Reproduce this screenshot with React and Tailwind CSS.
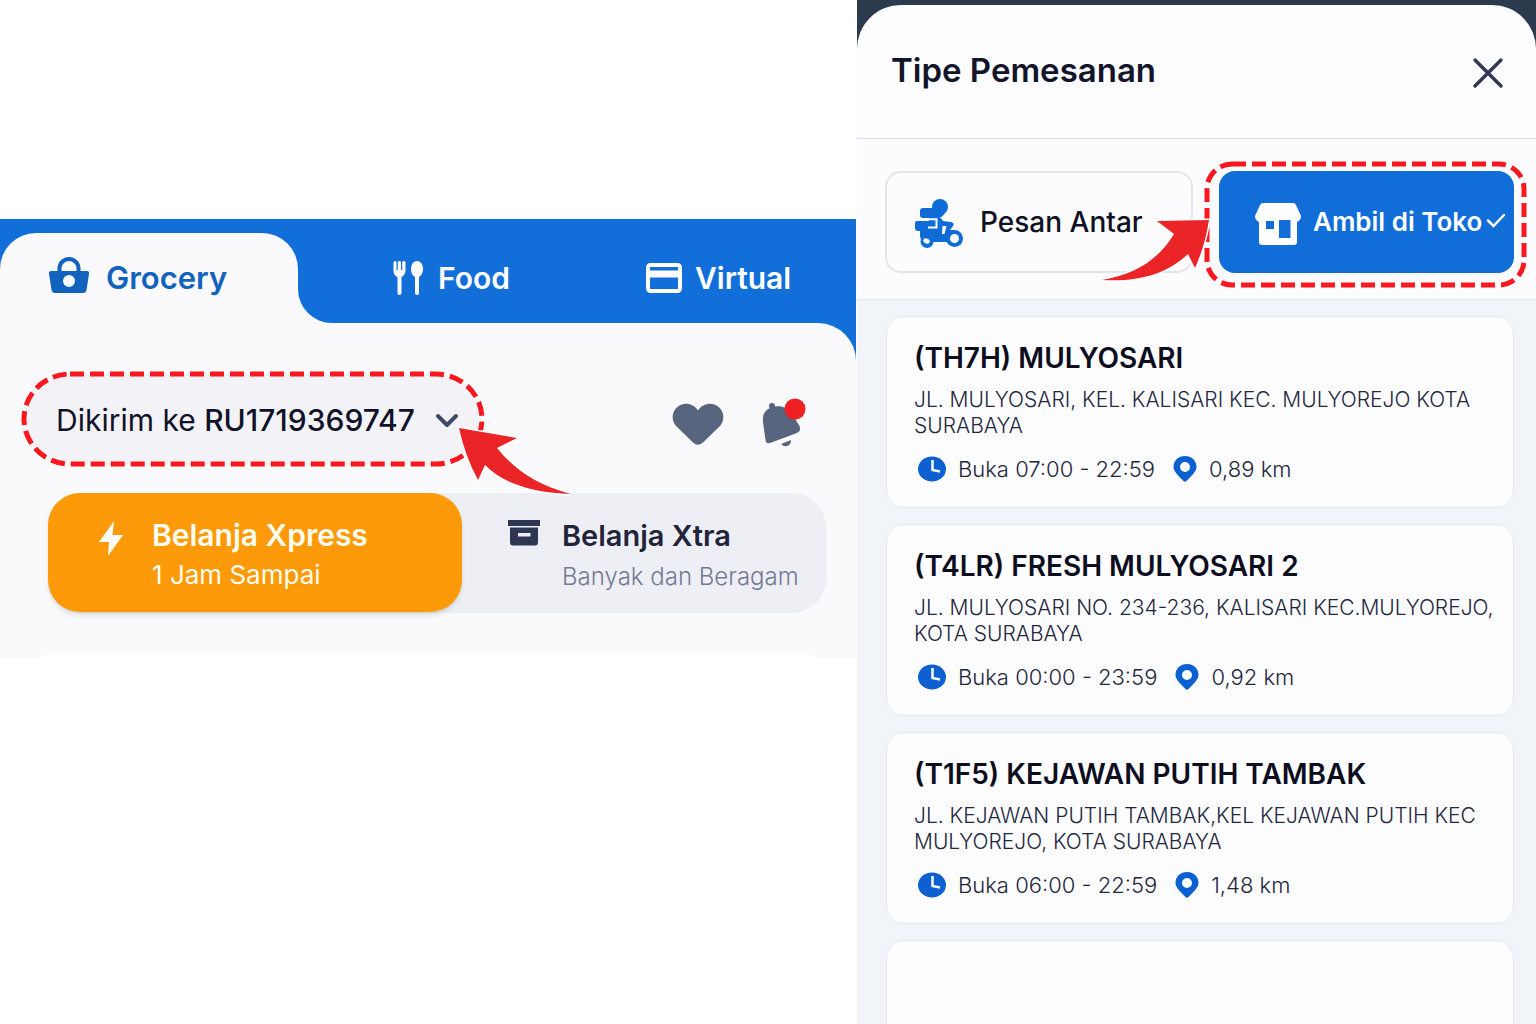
import React from "react";

const stores = [
  {
    name: "(TH7H) MULYOSARI",
    address: "JL. MULYOSARI, KEL. KALISARI KEC. MULYOREJO KOTA SURABAYA",
    hours: "Buka 07:00 - 22:59",
    distance: "0,89 km",
  },
  {
    name: "(T4LR) FRESH MULYOSARI 2",
    address: "JL. MULYOSARI NO. 234-236, KALISARI KEC.MULYOREJO, KOTA SURABAYA",
    hours: "Buka 00:00 - 23:59",
    distance: "0,92 km",
  },
  {
    name: "(T1F5) KEJAWAN PUTIH TAMBAK",
    address: "JL. KEJAWAN PUTIH TAMBAK,KEL KEJAWAN PUTIH KEC MULYOREJO, KOTA SURABAYA",
    hours: "Buka 06:00 - 22:59",
    distance: "1,48 km",
  },
];

function BasketIcon() {
  return (
    <svg width="42" height="38" viewBox="0 0 42 38" className="overflow-visible" aria-hidden="true">
      <path d="M11.500 14V9.500a9.500 9.500 0 0 1 19 0V14" fill="none" stroke="currentColor" strokeWidth="4" />
      <path
        fillRule="evenodd"
        fill="currentColor"
        d="M3 12H39Q41.500 12 41 15L38.500 31Q38 34 35 34H7Q4 34 3.500 31L1 15Q.500 12 3 12ZM21 16a6 6 0 1 0 0 12a6 6 0 1 0 0-12Z"
      />
    </svg>
  );
}

function CutleryIcon() {
  return (
    <svg width="32" height="36" viewBox="0 0 32 36" fill="currentColor" aria-hidden="true">
      <path d="M1.500 2Q3.500 0 4.500 2V10H5.800V2Q7.500 0 9 2V10H10.200V2Q11.500 0 13.500 2V11Q13 15 9.500 17V33Q9.500 35 7.500 35T5.500 33V17Q1.500 15 1.500 11Z" />
      <path d="M25 1C29 1 31 5 31 9C31 13 29.500 15.500 27 17V33Q27 35 25 35T23 33V17C20.500 15.500 19 13 19 9C19 5 21 1 25 1Z" />
    </svg>
  );
}

function CardIcon() {
  return (
    <svg width="38" height="32" viewBox="0 0 38 32" aria-hidden="true">
      <rect x="3" y="3" width="32" height="26" rx="2.500" fill="none" stroke="currentColor" strokeWidth="4" />
      <path d="M3 8.500H35V15.500H3Z" fill="currentColor" />
    </svg>
  );
}

function HeartIcon() {
  return (
    <svg width="52" height="42" viewBox="0 0 52 42" aria-hidden="true">
      <path
        fill="#57657f"
        d="M26 7.500C31 0 40 -1 46 3.500C52.500 8.500 53 17 48 23L31 39.500Q26 44 21 39.500L4 23C-1 17 -.500 8.500 6 3.500C12 -1 21 0 26 7.500Z"
      />
    </svg>
  );
}

function BellIcon() {
  return (
    <svg width="44" height="48" viewBox="0 0 44 48" className="overflow-visible" aria-hidden="true">
      <g fill="#57657f">
        <circle cx="10" cy="7" r="3" />
        <path d="M8 9C15 6 24 7 29 13C33 18 34 22 37 26Q40 31 35 34L8 44Q4 45 3.500 41L1 23C0 16 3 11 8 9Z" />
        <path d="M19 45L29 41Q29 46 25 47Q22 48 19 45Z" />
      </g>
      <circle cx="33" cy="10" r="10.500" fill="#ee2023" />
    </svg>
  );
}

function BoltIcon() {
  return (
    <svg width="26" height="36" viewBox="0 0 26 36" fill="#fffdf5" aria-hidden="true">
      <path d="M16 0L1 21H11L10 35L25 14H14.500Z" />
    </svg>
  );
}

function ArchiveIcon() {
  return (
    <svg width="32" height="26" viewBox="0 0 32 26" aria-hidden="true">
      <path d="M0 0H32V6H0Z" fill="#2f3652" />
      <path
        fillRule="evenodd"
        fill="#2f3652"
        d="M2 7.500H30V22Q30 25.500 27 25.500H5Q2 25.500 2 22ZM10 13V16.500H22.500V13Z"
      />
    </svg>
  );
}

function ScooterIcon() {
  return (
    <svg width="48" height="50" viewBox="0 0 48 50" aria-hidden="true">
      <g fill="#0f6cd6">
        <circle cx="25" cy="8" r="8" />
        <path d="M8 9H17L24 12L30 13Q28 19 22 19H8Q5 19 5 16V12Q5 9 8 9Z" />
        <path d="M2 22H14V18H22Q26 18 28 22L36 23Q40 24 38 27L35 31L40 31L36 43H13Q6 44 5 37V32H3Q0 32 0 29V24Q0 22 2 22Z" />
        <circle cx="12" cy="42.500" r="6.500" />
        <circle cx="39.500" cy="39.500" r="8.500" />
      </g>
      <path d="M5 20.300H14M14 20.300H21.500V28.500H13" fill="none" stroke="#fff" strokeWidth="2" />
      <path d="M27.500 27H31.500L29.500 35H27Z" fill="#fff" />
      <ellipse cx="11.500" cy="42" rx="3.300" ry="2.500" fill="#fff" transform="rotate(25 11.500 42)" />
      <circle cx="39.500" cy="39.500" r="4.500" fill="#fff" />
    </svg>
  );
}

function StoreIcon() {
  return (
    <svg width="46" height="42" viewBox="0 0 46 42" aria-hidden="true">
      <path
        fillRule="evenodd"
        fill="#fff"
        d="M8 0H38Q40 0 41 2L46 13Q46 17 42 19V39Q42 42 39 42H7Q4 42 4 39V19Q0 17 0 13L5 2Q6 0 8 0ZM11 18V26H19V18ZM24 17V35H35.500V17Z"
      />
    </svg>
  );
}

function ClockIcon() {
  return (
    <svg width="28" height="26" viewBox="0 0 28 26" aria-hidden="true">
      <ellipse cx="14" cy="13" rx="14" ry="12.500" fill="#0c60d0" />
      <path d="M14.500 4V14L22 15.500" fill="none" stroke="#fff" strokeWidth="2.500" />
    </svg>
  );
}

function PinIcon() {
  return (
    <svg width="24" height="26" viewBox="0 0 24 26" aria-hidden="true">
      <path
        fillRule="evenodd"
        fill="#0c60d0"
        d="M12 0C18.500 0 23.500 4.500 23.500 11C23.500 16 18 20 13.500 25Q12 26.500 10.500 25C6 20 .500 16 .500 11C.500 4.500 5.500 0 12 0ZM12 6a5 5 0 1 0 0 10a5 5 0 1 0 0-10Z"
      />
    </svg>
  );
}

function DashedRing({ radius }) {
  return (
    <svg className="pointer-events-none absolute inset-0 h-full w-full overflow-visible" aria-hidden="true">
      <rect width="100%" height="100%" rx={radius} fill="none" stroke="#fa171e" strokeWidth="5" strokeDasharray="14 6" />
    </svg>
  );
}

function ServiceTabs() {
  return (
    <nav className="grid grid-cols-[298fr_558fr] bg-[#126fd9] text-[30px] leading-9 font-semibold">
      <div className="pt-3.5">
        <button className="flex h-full w-full items-center gap-4 rounded-t-[36px] bg-[#fafafd] pl-12 text-[31px] text-[#1263bd]">
          <BasketIcon />
          Grocery
        </button>
      </div>
      <div className="bg-[#fafafd]">
        <div className="grid h-[104px] grid-cols-[300fr_258fr] rounded-bl-[34px] bg-[#126fd9] pt-3.5 text-white">
          <button className="flex items-center gap-3.5 pl-[94px]">
            <CutleryIcon />
            Food
          </button>
          <button className="flex items-center gap-3 pl-[47px]">
            <CardIcon />
            Virtual
          </button>
        </div>
      </div>
    </nav>
  );
}

function GroceryPanel() {
  return (
    <section className="pt-[219px] pr-px">
      <ServiceTabs />
      <div className="bg-[#126fd9]">
        <div className="rounded-tr-[38px] bg-[#fafafd] pt-[51px]">
          <div className="flex items-center justify-between pr-[50px] pl-6">
            <div className="relative rounded-full bg-[#f3f3f7]">
              <button className="flex h-[90px] w-[458px] items-center gap-5 rounded-full pt-0.5 pl-8 text-[30px] text-[#10122a]">
                <span>
                  Dikirim ke <span className="font-medium">RU1719369747</span>
                </span>
                <svg width="24" height="16" viewBox="0 0 24 16" aria-hidden="true">
                  <path d="M3 4L12 13L21 4" fill="none" stroke="#3d4966" strokeWidth="4" strokeLinecap="round" strokeLinejoin="round" />
                </svg>
              </button>
              <DashedRing radius="46" />
              <svg className="pointer-events-none absolute top-[50px] left-[430px] z-10" width="124" height="76" viewBox="0 0 124 76" aria-hidden="true">
                <path
                  d="M5 4L63 14L43 24C60 45 82 61 117 70C79 69 50 60 31 41L24 56Q11 32 5 4Z"
                  fill="#ea2427"
                  stroke="#fff"
                  strokeWidth="3"
                  paintOrder="stroke"
                />
              </svg>
            </div>
            <div className="flex items-center gap-[38px]">
              <button aria-label="Favorit" className="pt-2.5">
                <HeartIcon />
              </button>
              <button aria-label="Notifikasi" className="pt-2">
                <BellIcon />
              </button>
            </div>
          </div>
          <div className="mt-[29px] mr-[30px] ml-12 grid grid-cols-[414fr_364fr] rounded-[34px] bg-[#eeeff4]">
            <button className="grid h-[119px] grid-cols-[26px_1fr] gap-x-7 rounded-[32px] bg-[#fd9a09] pt-6 pl-[50px] text-left text-[#fffdf0] shadow-md">
              <span className="pt-1">
                <BoltIcon />
              </span>
              <span className="flex flex-col">
                <span className="text-[30px] leading-9 font-semibold">Belanja Xpress</span>
                <span className="text-[26px] leading-[44px]">1 Jam Sampai</span>
              </span>
            </button>
            <button className="grid h-[120px] grid-cols-[32px_1fr] gap-x-[22px] pt-[25px] pl-[46px] text-left whitespace-nowrap">
              <span className="pt-0.5">
                <ArchiveIcon />
              </span>
              <span className="flex flex-col">
                <span className="text-[29px] leading-9 font-semibold text-[#22243c]">Belanja Xtra</span>
                <span className="text-[24px] leading-[46px] font-light text-[#737a96]">Banyak dan Beragam</span>
              </span>
            </button>
          </div>
          <div className="mt-[39px] h-1.5 overflow-hidden px-8">
            <div className="h-12 rounded-t-[24px] bg-white" />
          </div>
        </div>
      </div>
    </section>
  );
}

function StoreCard({ store }) {
  return (
    <li className="rounded-[18px] border border-[#e6e8f0] bg-[#fdfdff] pt-6 pr-3 pb-6 pl-[27px]">
      <h2 className="text-[28px] leading-[34px] font-semibold text-[#0c0e20]">{store.name}</h2>
      <p className="mt-3 text-[21px] leading-[26px] font-light text-[#23263c]">{store.address}</p>
      <div className="mt-4 flex h-7 items-center text-[22px] font-light text-[#23263c]">
        <span className="flex items-center gap-3 pl-1">
          <ClockIcon />
          {store.hours}
        </span>
        <span className="ml-[18px] flex items-center gap-3">
          <PinIcon />
          {store.distance}
        </span>
      </div>
    </li>
  );
}

function OrderTypeSheet() {
  return (
    <section className="flex h-screen flex-col overflow-hidden bg-[#f1f4f9]">
      <div className="bg-[#2c3a4e] pt-[5px]">
        <header className="flex h-[134px] items-center justify-between rounded-t-[44px] border-b border-[#dcdce4] bg-[#fdfdff] pr-8 pb-0.5 pl-[34px]">
          <h1 className="text-[33px] font-semibold text-[#13152b]">Tipe Pemesanan</h1>
          <button aria-label="Tutup" className="pt-1">
            <svg width="32" height="32" viewBox="0 0 32 32" aria-hidden="true">
              <path d="M3 3L29 29M29 3L3 29" stroke="#2f3856" strokeWidth="3.500" strokeLinecap="round" />
            </svg>
          </button>
        </header>
      </div>
      <div className="grid h-[161px] grid-cols-[minmax(0,308fr)_minmax(0,295fr)] gap-[26px] border-b border-[#e6e7ee] bg-[#fcfcfe] pt-8 pr-[22px] pb-[26px] pl-7 whitespace-nowrap">
        <button className="flex items-center gap-[17px] rounded-2xl border-2 border-[#e4e5ec] pl-7 text-[28px] font-medium text-[#0f1124]">
          <span className="pt-1">
            <ScooterIcon />
          </span>
          Pesan Antar
        </button>
        <div className="relative">
          <button className="flex h-full w-full items-center gap-3 rounded-2xl bg-[#116dd8] pb-0.5 pl-9 text-[26px] font-semibold text-white">
            <span className="pt-1.5">
              <StoreIcon />
            </span>
            <span className="flex items-center gap-1">
              Ambil di Toko
              <svg width="20" height="16" viewBox="0 0 20 16" aria-hidden="true">
                <path d="M2 7.500L7.500 13L18 2" fill="none" stroke="#fff" strokeWidth="2.500" strokeLinecap="round" />
              </svg>
            </span>
          </button>
          <div className="pointer-events-none absolute -top-[7px] -right-[10px] -bottom-3 -left-3">
            <DashedRing radius="25" />
          </div>
          <svg className="pointer-events-none absolute top-[46px] -left-[120px]" width="114" height="68" viewBox="0 0 114 68" aria-hidden="true">
            <path
              d="M110 3L58 4L75 17C59 43 37 57 3 63C40 65 68 57 89 37L96 51Q106 29 110 3Z"
              fill="#ea2427"
              stroke="#fff"
              strokeWidth="3"
              paintOrder="stroke"
            />
          </svg>
        </div>
      </div>
      <ul className="flex flex-1 flex-col gap-4 pt-4 pr-[22px] pl-[29px]">
        {stores.map((store) => (
          <StoreCard key={store.name} store={store} />
        ))}
        <li className="flex-1 rounded-t-[18px] border border-b-0 border-[#e6e8f0] bg-[#fdfdff]" />
      </ul>
    </section>
  );
}

export default function App() {
  return (
    <main className="grid min-h-screen grid-cols-[857fr_679fr] bg-white font-['Inter',sans-serif]">
      <GroceryPanel />
      <OrderTypeSheet />
    </main>
  );
}
